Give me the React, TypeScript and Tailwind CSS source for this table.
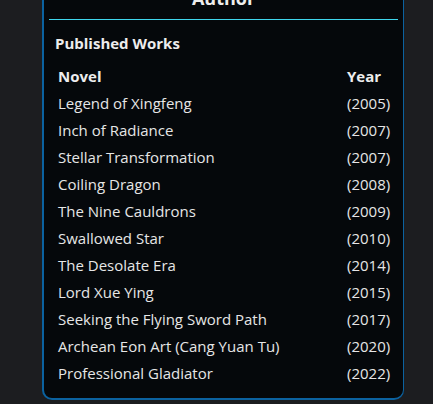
import React from "react";

const works: [string, string][] = [
  ["Legend of Xingfeng", "(2005)"],
  ["Inch of Radiance", "(2007)"],
  ["Stellar Transformation", "(2007)"],
  ["Coiling Dragon", "(2008)"],
  ["The Nine Cauldrons", "(2009)"],
  ["Swallowed Star", "(2010)"],
  ["The Desolate Era", "(2014)"],
  ["Lord Xue Ying", "(2015)"],
  ["Seeking the Flying Sword Path", "(2017)"],
  ["Archean Eon Art (Cang Yuan Tu)", "(2020)"],
  ["Professional Gladiator", "(2022)"],
];

export default function App() {
  return (
    <div
      className="h-[404px] overflow-hidden bg-[#1c1d20] text-[#e6e6e6]"
      style={{ fontFamily: '"Open Sans", "Noto Sans", sans-serif' }}
    >
      <div className="ml-[42px] mt-[-16px] w-[362px] rounded-b-[10px] border-l-2 border-r border-b-2 border-[#0b62a0] bg-[#05080b] pb-[11px]">
        <div className="mx-[5px] border-b border-[#3fd6ec] pb-[7px] text-center text-[18px] font-bold leading-[28px] text-[#ededed]">
          Author
        </div>
        <div className="ml-[11px] mt-[13px] text-[15px] font-bold leading-[20px] text-[#ededed]">
          Published Works
        </div>
        <div className="mt-[10px] text-[15px]">
          <div className="flex h-[27px] items-center pl-[14px] font-bold text-[#ededed]">
            <span className="flex-1">Novel</span>
            <span className="w-[56px]">Year</span>
          </div>
          {works.map(([t, y]) => (
            <div key={t} className="flex h-[27px] items-center pl-[14px]">
              <span className="flex-1">{t}</span>
              <span className="w-[56px]">{y}</span>
            </div>
          ))}
        </div>
      </div>
    </div>
  );
}
